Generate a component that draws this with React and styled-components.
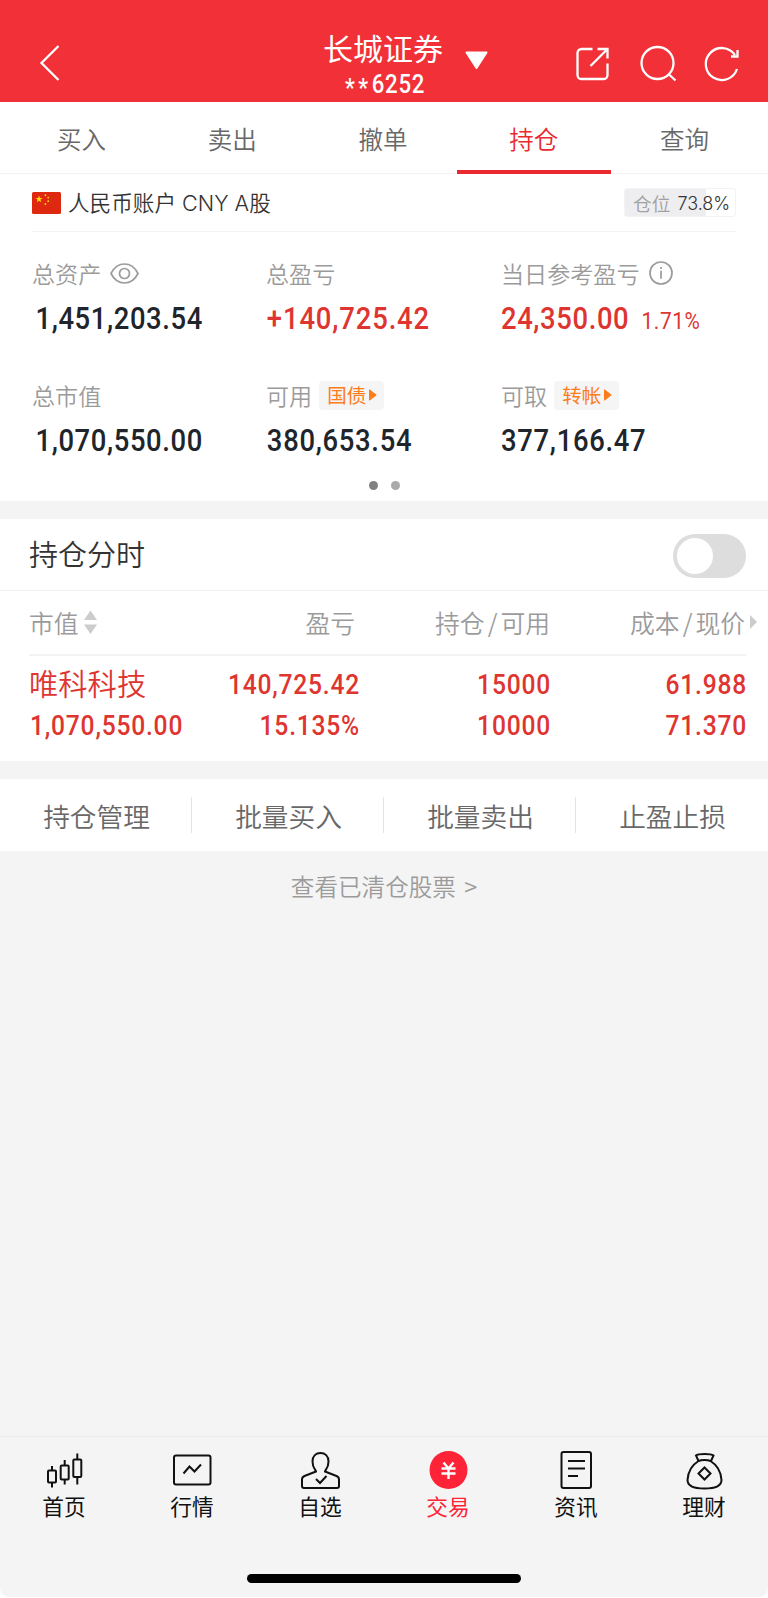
import React, { useState } from 'react'
import styled, { createGlobalStyle, css, ThemeProvider } from 'styled-components'

const theme = {
  colors: {
    header: '#f13137',
    primary: '#ea2a2e',
    up: '#de3531',
    dark: '#20242b',
    text: '#333333',
    tab: '#686868',
    label: '#9b9b9b',
    orange: '#fd7d1c',
    bg: '#f4f4f4',
    line: '#f3f3f4',
  },
  fonts: {
    base: "'Noto Sans CJK SC', sans-serif",
    latin: "Inter, 'Noto Sans CJK SC', sans-serif",
    number: "Roboto, 'Noto Sans CJK SC', sans-serif",
  },
}

const GlobalStyle = createGlobalStyle`
  *,
  *::before,
  *::after {
    box-sizing: border-box;
  }
  body {
    margin: 0;
    background-color: #fff;
  }
  button {
    margin: 0;
    padding: 0;
    border: 0;
    background: none;
    color: inherit;
    font: inherit;
  }
`

const Screen = styled.div`
  display: flex;
  flex-direction: column;
  width: 768px;
  height: 1597px;
  overflow: hidden;
  border-radius: 0 0 9px 9px;
  background-color: ${({ theme }) => theme.colors.bg};
  font-family: ${({ theme }) => theme.fonts.base};
  font-weight: 350;
  white-space: nowrap;
`

const Icon = styled.svg`
  display: block;
  flex: none;
  overflow: visible;
  fill: none;
  stroke: currentColor;
  stroke-width: ${({ $stroke }) => $stroke || 2};
`

const numberStyle = css`
  font-family: ${({ theme }) => theme.fonts.number};
  font-weight: 500;
  letter-spacing: 0.9px;
  transform: scaleX(0.87);
`

/* header */

const StyledHeader = styled.header`
  display: grid;
  grid-template-columns: 1fr auto 1fr;
  height: 102px;
  padding: 22px 28px 0 38px;
  background-color: ${({ theme }) => theme.colors.header};
  color: #fff;
`

const BackButton = styled.button`
  justify-self: start;
  align-self: center;
`

const AccountSwitch = styled.button`
  display: flex;
  gap: 22px;
  padding: 7px 0 0 33px;
`

const Broker = styled.span`
  display: flex;
  flex-direction: column;
  align-items: center;
  width: 120px;
`

const BrokerName = styled.span`
  font-size: 30px;
  font-weight: 400;
  line-height: 36px;
`

const BrokerCode = styled.span`
  margin-left: 4px;
  font-size: 25.5px;
  line-height: 38px;
  ${numberStyle}
`

const Mask = styled.span`
  letter-spacing: 4px;
  line-height: 1;
  vertical-align: -4px;
`

const HeaderActions = styled.div`
  display: flex;
  justify-self: end;
  align-self: center;
  gap: 31px;
`

/* tabs */

const StyledTabs = styled.nav`
  display: grid;
  grid-template-columns: repeat(5, minmax(0, 1fr));
  flex: none;
  height: 72px;
  padding: 0 8px 0 6px;
  border-bottom: 1px solid ${({ theme }) => theme.colors.line};
  background-color: #fff;
`

const Tab = styled.button`
  display: flex;
  flex-direction: column;
  align-items: center;
  color: ${({ theme, $active }) =>
    $active ? theme.colors.primary : theme.colors.tab};
  font-size: 24.5px;
  line-height: 74px;

  &::after {
    content: '';
    flex: none;
    width: 154px;
    height: 4px;
    margin-top: -6px;
    background-color: ${({ theme, $active }) =>
      $active ? theme.colors.primary : 'transparent'};
  }
`

/* account summary */

const Summary = styled.section`
  flex: none;
  height: 327px;
  padding: 0 32px;
  background-color: #fff;
`

const AccountRow = styled.div`
  display: flex;
  align-items: center;
  height: 58px;
  border-bottom: 1px solid ${({ theme }) => theme.colors.line};
`

const AccountName = styled.span`
  flex: 1;
  padding-left: 7px;
  color: ${({ theme }) => theme.colors.text};
  font-family: ${({ theme }) => theme.fonts.latin};
  font-size: 21.6px;
  line-height: 28px;
`

const PositionBadge = styled.div`
  display: flex;
  align-items: center;
  gap: 7px;
  width: 112px;
  height: 29px;
  padding-left: 8px;
  border: 1px solid #f3f3f5;
  border-radius: 3px;
  background: linear-gradient(#eeeef1, #eeeef1) no-repeat left / 73.8% 100%;
  color: #a0a0a0;
  font-size: 18.7px;
`

const PositionValue = styled.span`
  padding-top: 2px;
  color: ${({ theme }) => theme.colors.text};
  font-family: ${({ theme }) => theme.fonts.latin};
  font-size: 18px;
`

const Stats = styled.div`
  display: grid;
  grid-template-columns: 234px 235px 1fr;
  grid-auto-rows: 122px;
  padding-top: 24px;
`

const Stat = styled.div`
  min-width: 0;
`

const StatLabel = styled.div`
  display: flex;
  align-items: center;
  height: 34px;
  color: ${({ theme }) => theme.colors.label};
  font-size: 23.1px;
  line-height: 33px;
`

const StatIcon = styled.span`
  margin-left: 9px;
`

const Tag = styled.button`
  display: flex;
  align-items: center;
  gap: 3px;
  height: 29px;
  margin-left: 7px;
  padding: 0 7px 0 8px;
  border-radius: 4px;
  background-color: #f5f5f5;
  color: ${({ theme }) => theme.colors.orange};
  font-size: 19.5px;
  font-weight: 400;
  line-height: 28px;
`

const StatValue = styled.div`
  display: flex;
  align-items: baseline;
  gap: 14px;
  margin-top: 8px;
  padding-left: ${({ $indent }) => $indent || 0}px;
  color: ${({ theme, $up }) => ($up ? theme.colors.up : theme.colors.dark)};
  font-size: 31.5px;
  line-height: 42px;
  transform-origin: left;
  ${numberStyle}
  letter-spacing: ${({ $spacing }) => $spacing || 0.8}px;
`

const StatRate = styled.span`
  font-size: 24px;
  font-weight: 400;
`

const Dots = styled.div`
  display: flex;
  justify-content: center;
  gap: 13px;
`

const Dot = styled.span`
  width: 9px;
  height: 9px;
  margin-top: -19px;
  border-radius: 50%;
  background-color: ${({ $active }) => ($active ? '#808080' : '#aaaaaa')};
`

/* holdings */

const Holdings = styled.section`
  flex: none;
  height: 242px;
  margin-top: 18px;
  background-color: #fff;
`

const HoldingsTitle = styled.div`
  display: flex;
  align-items: center;
  justify-content: space-between;
  height: 72px;
  padding: 0 22px 4px 29px;
  border-bottom: 1px solid ${({ theme }) => theme.colors.line};
  color: ${({ theme }) => theme.colors.text};
  font-size: 29px;
  line-height: 66px;
`

const Switch = styled.button`
  display: flex;
  justify-content: ${({ $on }) => ($on ? 'flex-end' : 'flex-start')};
  width: 73px;
  height: 44px;
  margin-top: 6px;
  padding: 4px;
  border-radius: 22px;
  background-color: ${({ theme, $on }) =>
    $on ? theme.colors.primary : '#dddddd'};

  &::after {
    content: '';
    width: 36px;
    height: 36px;
    border-radius: 50%;
    background-color: #fff;
  }
`

const Table = styled.div`
  margin: 0 22px 0 29px;
`

const Row = styled.div`
  display: grid;
  grid-template-columns: 160px 170px 191px 196px;
  align-items: center;
`

const HeadRow = styled(Row)`
  height: 65px;
  padding-bottom: 2px;
  border-bottom: 2px solid ${({ theme }) => theme.colors.line};
  color: ${({ theme }) => theme.colors.label};
  font-size: 24.8px;
`

const HeadCell = styled.div`
  display: flex;
  align-items: center;
  justify-content: ${({ $left }) => ($left ? 'flex-start' : 'flex-end')};
  padding-right: ${({ $inset }) => $inset || 0}px;
  line-height: 36px;
`

const Slash = styled.span`
  padding: 0 3px;
`

const SortIcon = styled.span`
  margin-left: 5px;
`

const MoreIcon = styled.span`
  width: 0;
  margin-right: -4px;
  padding-left: 5px;
`

const Position = styled.div`
  display: grid;
  grid-auto-rows: 41.5px;
  padding-top: 8px;
`

const StockName = styled.div`
  padding-bottom: 6px;
  color: ${({ theme }) => theme.colors.up};
  font-size: 29.3px;
  line-height: 34px;
`

const Value = styled.div`
  margin: 0 -1px 0 1px;
  color: ${({ theme }) => theme.colors.up};
  font-size: 28.3px;
  line-height: 40px;
  text-align: ${({ $left }) => ($left ? 'left' : 'right')};
  transform-origin: ${({ $left }) => ($left ? 'left' : 'right')};
  ${numberStyle}
`

const BatchBar = styled.div`
  display: grid;
  grid-template-columns: repeat(4, 1fr);
  align-items: center;
  flex: none;
  height: 72px;
  margin-top: 18px;
  background-color: #fff;
`

const BatchButton = styled.button`
  height: 36px;
  padding-left: 2px;
  border-right: 1px solid
    ${({ $last }) => ($last ? 'transparent' : '#e4e4e4')};
  color: ${({ theme }) => theme.colors.tab};
  font-size: 26.7px;
  line-height: 35px;
`

const ClearedLink = styled.button`
  flex: none;
  align-self: center;
  height: 40px;
  margin-top: 15px;
  color: ${({ theme }) => theme.colors.label};
  font-size: 23.6px;
  line-height: 40px;
  word-spacing: 3px;
`

/* bottom navigation */

const BottomNav = styled.nav`
  display: grid;
  grid-template-columns: repeat(6, 1fr);
  flex: none;
  height: 138px;
  margin-top: auto;
  border-top: 1px solid #ececec;
`

const NavItem = styled.button`
  display: flex;
  flex-direction: column;
  align-items: center;
  padding-top: 13px;
  color: ${({ $active }) => ($active ? '#fe2337' : '#111111')};
  font-size: 21.7px;
  font-weight: 400;
  line-height: 29px;
`

const HomeIndicator = styled.div`
  flex: none;
  align-self: center;
  width: 274px;
  height: 9px;
  margin-bottom: 14px;
  border-radius: 5px;
  background-color: #000;
`

const Flag = () => (
  <Icon width="29" height="22" viewBox="0 0 29 22">
    <rect width="29" height="22" rx="1.5" fill="#df2810" stroke="none" />
    <g fill="#ffde00" stroke="none">
      <path d="M7 3.6l.9 2.4h2.7L8.4 7.6l.8 2.7L7 8.7l-2.2 1.6.8-2.7L3.4 6h2.7z" />
      <circle cx="13.4" cy="3.2" r=".9" />
      <circle cx="16.2" cy="5.6" r=".9" />
      <circle cx="16.2" cy="9.2" r=".9" />
      <circle cx="13.4" cy="12" r=".9" />
    </g>
  </Icon>
)

const EyeIcon = () => (
  <Icon width="29" height="21" viewBox="0 0 29 21" $stroke={1.7}>
    <path d="M1 10.5C4 4.5 9 1 14.5 1S25 4.5 28 10.5C25 16.5 20 20 14.5 20S4 16.5 1 10.5z" />
    <circle cx="14.5" cy="10.5" r="5" />
  </Icon>
)

const InfoIcon = () => (
  <Icon width="24" height="24" viewBox="0 0 24 24" $stroke={1.7}>
    <circle cx="12" cy="12" r="11" />
    <path d="M12 9.8v8M12 6v2" />
  </Icon>
)

const TagArrow = () => (
  <Icon width="8" height="12" viewBox="0 0 8 12">
    <path
      d="M.5 .8v10.4L7.2 6z"
      fill="currentColor"
      strokeWidth="1"
      strokeLinejoin="round"
    />
  </Icon>
)

const navIcons = {
  首页: (
    <>
      <path d="M8 16v5M8 32.5v5M20.7 10v5M20.7 29.5v5M33.3 3.5v6M33.3 27v7.500" />
      <rect x="4" y="20.5" width="8" height="12" rx="1" />
      <rect x="16.7" y="15.5" width="8" height="14" rx="1" />
      <rect x="29.3" y="9.5" width="8" height="17.5" rx="1" />
    </>
  ),
  行情: (
    <>
      <rect x="2" y="5.5" width="36.5" height="29" rx="2" />
      <path d="M11.500 23.500l6-7 5 5 6.500-7" />
    </>
  ),
  自选: (
    <>
      <path d="M16 21.5c0-1.5-3.5-3-3.5-10C12.5 6 16 3 20.500 3S28.500 6 28.500 11.500c0 7-3.500 8.500-3.500 10l11.500 4.500c2 .8 2.500 1.500 2.500 3.500v6.500c0 1.500-.5 2-2 2H4c-1.500 0-2-.5-2-2v-6.500c0-2 .5-2.700 2.500-3.500z" />
      <path d="M16 29l4 4 6.500-7" />
    </>
  ),
  交易: (
    <>
      <circle cx="20.5" cy="20" r="19" fill="currentColor" stroke="none" />
      <g stroke="#fff" strokeWidth="2.4">
        <path d="M15.5 12.5l5 6 5-6M20.500 18v11M13.500 18.500h14M13.500 23.500h14" />
      </g>
    </>
  ),
  资讯: (
    <>
      <rect x="5.5" y="2" width="29.5" height="36" rx="2" />
      <path d="M12 11h17M12 18.5h17M12 26h10" />
    </>
  ),
  理财: (
    <>
      <path d="M14.5 11L12 5.5C14 3.5 27 3.5 29.5 5.5L27 11" />
      <path d="M14.5 11c3-1.5 9-1.5 12 0 6.5 4 10.5 11 11 19 0 6-5 8.5-17 8.5s-17-2.500-17-8.500c.5-8 4.500-15 11-19z" />
      <path d="M20.5 17.5l6 6-6 6-6-6z" />
    </>
  ),
}

const Header = () => (
  <StyledHeader>
    <BackButton type="button" aria-label="返回">
      <Icon width="21" height="36" viewBox="0 0 21 36" $stroke={2.3}>
        <path d="M20.5 1L3.5 18l17 17" />
      </Icon>
    </BackButton>
    <AccountSwitch type="button">
      <Broker>
        <BrokerName>长城证券</BrokerName>
        <BrokerCode>
          <Mask>**</Mask>6252
        </BrokerCode>
      </Broker>
      <Icon width="23" height="60" viewBox="0 0 23 60">
        <path
          d="M1.5 23.5h20L11.5 39z"
          fill="currentColor"
          strokeLinejoin="round"
        />
      </Icon>
    </AccountSwitch>
    <HeaderActions>
      <Icon width="34" height="36" viewBox="0 0 34 36" $stroke={2.3}>
        <path d="M17.5 4H6.5a4 4 0 0 0-4 4V30a4 4 0 0 0 4 4H28.5a4 4 0 0 0 4-4V18.5M22.5 4h10V13.5M32.500 4L15.500 21" />
      </Icon>
      <Icon width="36" height="36" viewBox="0 0 36 36" $stroke={2.3}>
        <circle cx="17.5" cy="18" r="16" />
        <path d="M28.5 29l7 6.500" />
      </Icon>
      <Icon width="33" height="36" viewBox="0 0 33 36" $stroke={2.3}>
        <path d="M30 24A16 16 0 1 1 28 10M30.500 5v6.500H24" />
      </Icon>
    </HeaderActions>
  </StyledHeader>
)

const tabs = ['买入', '卖出', '撤单', '持仓', '查询']
const batchActions = ['持仓管理', '批量买入', '批量卖出', '止盈止损']

const App = () => {
  const [activeTab, setActiveTab] = useState('持仓')
  const [activeNav, setActiveNav] = useState('交易')
  const [chartOn, setChartOn] = useState(false)

  return (
    <ThemeProvider theme={theme}>
      <GlobalStyle />
      <Screen>
        <Header />
        <StyledTabs>
          {tabs.map((label) => (
            <Tab
              key={label}
              type="button"
              $active={label === activeTab}
              onClick={() => setActiveTab(label)}
            >
              {label}
            </Tab>
          ))}
        </StyledTabs>

        <Summary>
          <AccountRow>
            <Flag />
            <AccountName>人民币账户 CNY A股</AccountName>
            <PositionBadge>
              仓位 <PositionValue>73.8%</PositionValue>
            </PositionBadge>
          </AccountRow>
          <Stats>
            <Stat>
              <StatLabel>
                总资产
                <StatIcon>
                  <EyeIcon />
                </StatIcon>
              </StatLabel>
              <StatValue $indent={4} $spacing={0.7}>
                1,451,203.54
              </StatValue>
            </Stat>
            <Stat>
              <StatLabel>总盈亏</StatLabel>
              <StatValue $up $indent={1} $spacing={1}>
                +140,725.42
              </StatValue>
            </Stat>
            <Stat>
              <StatLabel>
                当日参考盈亏
                <StatIcon>
                  <InfoIcon />
                </StatIcon>
              </StatLabel>
              <StatValue $up $spacing={0.7}>
                24,350.00 <StatRate>1.71%</StatRate>
              </StatValue>
            </Stat>
            <Stat>
              <StatLabel>总市值</StatLabel>
              <StatValue $indent={4} $spacing={0.7}>
                1,070,550.00
              </StatValue>
            </Stat>
            <Stat>
              <StatLabel>
                可用
                <Tag type="button">
                  国债
                  <TagArrow />
                </Tag>
              </StatLabel>
              <StatValue $indent={1}>380,653.54</StatValue>
            </Stat>
            <Stat>
              <StatLabel>
                可取
                <Tag type="button">
                  转帐
                  <TagArrow />
                </Tag>
              </StatLabel>
              <StatValue>377,166.47</StatValue>
            </Stat>
          </Stats>
          <Dots>
            <Dot $active />
            <Dot />
          </Dots>
        </Summary>

        <Holdings>
          <HoldingsTitle>
            持仓分时
            <Switch
              type="button"
              role="switch"
              aria-checked={chartOn}
              $on={chartOn}
              onClick={() => setChartOn(!chartOn)}
            />
          </HoldingsTitle>
          <Table>
            <HeadRow>
              <HeadCell $left>
                市值
                <SortIcon>
                  <Icon width="13" height="24" viewBox="0 0 13 24">
                    <path
                      d="M0 10L6.5 .5 13 10zM0 14.500l6.500 9.500L13 14.500z"
                      fill="#cccccc"
                      stroke="none"
                    />
                  </Icon>
                </SortIcon>
              </HeadCell>
              <HeadCell $inset={4}>盈亏</HeadCell>
              <HeadCell>
                持仓<Slash>/</Slash>可用
              </HeadCell>
              <HeadCell>
                成本<Slash>/</Slash>现价
                <MoreIcon>
                  <Icon width="8" height="14" viewBox="0 0 8 14">
                    <path d="M0 0v14l7-7z" fill="#cccccc" stroke="none" />
                  </Icon>
                </MoreIcon>
              </HeadCell>
            </HeadRow>
            <Position>
              <Row>
                <StockName>唯科科技</StockName>
                <Value>140,725.42</Value>
                <Value>15000</Value>
                <Value>61.988</Value>
              </Row>
              <Row>
                <Value $left>1,070,550.00</Value>
                <Value>15.135%</Value>
                <Value>10000</Value>
                <Value>71.370</Value>
              </Row>
            </Position>
          </Table>
        </Holdings>

        <BatchBar>
          {batchActions.map((label, index) => (
            <BatchButton
              key={label}
              type="button"
              $last={index === batchActions.length - 1}
            >
              {label}
            </BatchButton>
          ))}
        </BatchBar>
        <ClearedLink type="button">查看已清仓股票 &gt;</ClearedLink>

        <BottomNav>
          {Object.entries(navIcons).map(([label, icon]) => (
            <NavItem
              key={label}
              type="button"
              $active={label === activeNav}
              onClick={() => setActiveNav(label)}
            >
              <Icon width="41" height="41" viewBox="0 0 41 41">
                {icon}
              </Icon>
              {label}
            </NavItem>
          ))}
        </BottomNav>
        <HomeIndicator />
      </Screen>
    </ThemeProvider>
  )
}

export default App
